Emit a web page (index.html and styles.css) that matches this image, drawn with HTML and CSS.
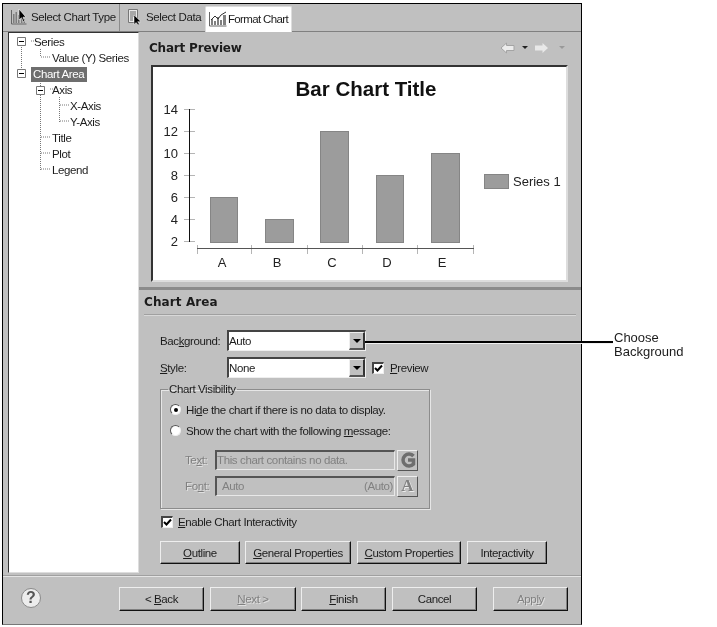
FILE: index.html
```html
<!DOCTYPE html>
<html lang="en">
<head>
<meta charset="utf-8">
<title>Format Chart</title>
<link rel="stylesheet" href="styles.css">
</head>
<body>
<div class="page">
  <div class="window">
    <div class="tabs">
      <div class="tab tab-first">
        <svg class="ico" viewBox="0 0 16 16"><path d="M.500 1v14h15" fill="none" stroke="#666"/><path d="M2 5h1.500v9H2zM4.500 3H6v11H4.500zM7 6h1.500v8H7zM10 8h1.500v6H10zM12.500 10H14v4h-1.500z" fill="#7c7c7c"/><path d="M8 0v11l2.500-2.200 1.800 4 1.500-.7-1.800-3.900H15z" fill="#000" stroke="#fff" stroke-width=".6"/></svg>
        <span>Select Chart Type</span>
      </div>
      <div class="tab tab-second">
        <svg class="ico ico-doc" viewBox="0 0 14 16"><path d="M.500.500h9v13h-9z" fill="#e8e8e8" stroke="#777"/><path d="M2 3h6M2 5h6M2 7h6M2 9h3M2 11h3" stroke="#666"/><path d="M6 6v9.500l2.200-2 1.800 2.500 1.400-.8-1.700-2.500H13z" fill="#000" stroke="#fff" stroke-width=".5"/></svg>
        <span>Select Data</span>
      </div>
      <div class="tab tab-active">
        <svg class="ico ico-wide" viewBox="0 0 18 16"><path d="M.500 1v14h17" fill="none" stroke="#666"/><path d="M2 8h2v6H2zM5 10h2v4H5zM8 6h2v8H8zM11 9h2v5h-2zM14 4h3v10h-3z" fill="#808080"/><path d="M2 9l4-4 3 3 3-4 5-3" fill="none" stroke="#333"/></svg>
        <span>Format Chart</span>
      </div>
    </div>
    <div class="main">
      <div class="tree">
        <svg class="tree-guides" viewBox="0 0 129 150">
          <path d="M13.500 8v32M23 8h6M33 24h9M32.500 16v8M23 40h6M32.500 48v89M42 56h6M51.500 64v25M52 72h9M52 88h9M33 104h9M33 120h9M33 136h9" fill="none" stroke="#777" stroke-dasharray="1 1"/>
          <path d="M9.500 4.500h8v8h-8zM9.500 36.500h8v8h-8zM28.500 53.500h8v8h-8z" fill="#fff" stroke="#777"/>
          <path d="M11 8.500h5M11 40.500h5M30 57.500h5" stroke="#000"/>
        </svg>
        <div class="node l1">Series</div>
        <div class="node l2">Value (Y) Series</div>
        <div class="node l1"><span class="selected">Chart Area</span></div>
        <div class="node l2">Axis</div>
        <div class="node l3">X-Axis</div>
        <div class="node l3">Y-Axis</div>
        <div class="node l2">Title</div>
        <div class="node l2">Plot</div>
        <div class="node l2">Legend</div>
      </div>
      <div class="pane">
        <div class="preview-head">
          <div class="heading heading-tight">Chart Preview</div>
          <div class="nav">
            <svg class="nav-arrow" viewBox="0 0 15 12"><path d="M6.500 1L1 6l5.500 5V8.500H14v-5H6.500z" fill="#ececec" stroke="#a4a4a4"/></svg>
            <span class="nav-drop"></span>
            <svg class="nav-arrow nav-next" viewBox="0 0 15 12"><path d="M8.500 1L14 6l-5.500 5V8.500H1v-5h7.500z" fill="#e8e8e8"/></svg>
            <span class="nav-drop nav-drop-off"></span>
          </div>
        </div>
        <div class="chart-box">
          <svg class="chart" viewBox="153 67 413 213">
            <text class="c-title" x="366" y="96" text-anchor="middle">Bar Chart Title</text>
            <g class="c-tick">
              <path d="M184 109.500h11M184 131.500h11M184 153.500h11M184 175.500h11M184 197.500h11M184 219.500h11M184 241.500h11"/>
              <path d="M197.500 245v9M251.500 245v9M307.500 245v9M362.500 245v9M417.500 245v9M473.500 245v9"/>
            </g>
            <path d="M189.500 109v133" stroke="#111" fill="none"/>
            <path d="M197 248.500h277" stroke="#555" fill="none"/>
            <g class="c-num" text-anchor="end">
              <text x="178" y="114">14</text>
              <text x="178" y="136">12</text>
              <text x="178" y="158">10</text>
              <text x="178" y="180">8</text>
              <text x="178" y="202">6</text>
              <text x="178" y="224">4</text>
              <text x="178" y="246">2</text>
            </g>
            <g class="c-bar">
              <rect x="210.500" y="197.500" width="27" height="45"/>
              <rect x="265.500" y="219.500" width="28" height="23"/>
              <rect x="320.500" y="131.500" width="28" height="111"/>
              <rect x="376.500" y="175.500" width="27" height="67"/>
              <rect x="431.500" y="153.500" width="28" height="89"/>
              <rect x="484.500" y="174.500" width="24" height="14"/>
            </g>
            <g class="c-num" text-anchor="middle">
              <text x="222" y="267">A</text>
              <text x="277" y="267">B</text>
              <text x="332" y="267">C</text>
              <text x="387" y="267">D</text>
              <text x="442" y="267">E</text>
            </g>
            <text class="c-num" x="513" y="186">Series 1</text>
          </svg>
        </div>
        <div class="sash"></div>
        <div class="section-head heading">Chart Area</div>
        <div class="form">
          <div class="form-row row-bg">
            <span class="label">Bac<u>k</u>ground:</span>
            <div class="combo"><span class="combo-text">Auto</span><span class="combo-btn"><i class="caret"></i></span></div>
          </div>
          <div class="form-row row-style">
            <span class="label"><u>S</u>tyle:</span>
            <div class="combo"><span class="combo-text">None</span><span class="combo-btn"><i class="caret"></i></span></div>
            <span class="check"><svg viewBox="0 0 9 9"><path d="M1 4l2.500 2.500L8 1.500" fill="none" stroke="#000" stroke-width="2"/></svg></span>
            <span><u>P</u>review</span>
          </div>
          <fieldset class="group">
            <legend class="group-title">Chart Visibility</legend>
            <div class="radio-row"><span class="radio radio-on"></span><span>Hi<u>d</u>e the chart if there is no data to display.</span></div>
            <div class="radio-row"><span class="radio"></span><span>Show the chart with the following <u>m</u>essage:</span></div>
            <div class="msg-row msg-first">
              <span class="msg-label">Te<u>x</u>t:</span>
              <div class="msg-input">This chart contains no data.</div>
              <div class="msg-btn"><span class="g-mark"><svg viewBox="0 0 16 16"><path d="M13.500 4A6 6 0 1 0 13.500 12V8H8" fill="none" stroke="#6e6e6e" stroke-width="3.500"/></svg></span></div>
            </div>
            <div class="msg-row">
              <span class="msg-label">Fo<u>n</u>t:</span>
              <div class="msg-input msg-font"><span>Auto</span><span>(Auto)</span></div>
              <div class="msg-btn msg-a">A</div>
            </div>
          </fieldset>
          <div class="enable-row">
            <span class="check"><svg viewBox="0 0 9 9"><path d="M1 4l2.500 2.500L8 1.500" fill="none" stroke="#000" stroke-width="2"/></svg></span>
            <span><u>E</u>nable Chart Interactivity</span>
          </div>
          <div class="btn-row">
            <div class="btn w-outline"><span><u>O</u>utline</span></div>
            <div class="btn w-general"><span><u>G</u>eneral Properties</span></div>
            <div class="btn w-custom"><span><u>C</u>ustom Properties</span></div>
            <div class="btn w-inter"><span>Inte<u>r</u>activity</span></div>
          </div>
        </div>
      </div>
    </div>
    <div class="footer">
      <div class="help">?</div>
      <div class="btn w-back"><span>&lt; <u>B</u>ack</span></div>
      <div class="btn w-next off"><span><u>N</u>ext &gt;</span></div>
      <div class="btn w-finish"><span><u>F</u>inish</span></div>
      <div class="btn w-cancel"><span>Cancel</span></div>
      <div class="btn w-apply off"><span>App<u>l</u>y</span></div>
    </div>
  </div>
  <div class="callout-line"></div>
  <div class="callout-text">Choose<br>Background</div>
</div>
</body>
</html>
```
FILE: styles.css
```css
* { box-sizing: border-box; }
html, body { margin: 0; background: #fff; }
.page {
  position: relative;
  width: 717px;
  height: 627px;
  padding: 3px 0 0 2px;
  overflow: hidden;
  will-change: transform;
  font-family: "Liberation Sans", Arial, sans-serif;
  font-size: 11.5px;
  letter-spacing: -0.38px;
  color: #1c1c1c;
}
.window {
  width: 580px;
  height: 622px;
  background: #c0c0c0;
  border: 1px solid #000;
  border-bottom-color: #777;
  display: flex;
  flex-direction: column;
}
.tabs {
  height: 28px;
  flex: none;
  display: flex;
  align-items: flex-end;
  border-bottom: 1px solid #808080;
  position: relative;
}
.tab {
  height: 27px;
  display: flex;
  align-items: center;
  gap: 4px;
  padding-bottom: 1px;
  white-space: nowrap;
}
.tab-first { width: 117px; padding-left: 8px; border-right: 1px solid #8c8c8c; }
.tab-second { width: 85px; padding-left: 8px; }
.tab-active {
  width: 87px;
  height: 26px;
  margin-bottom: -1px;
  padding-left: 3px;
  gap: 1px;
  letter-spacing: -0.65px;
  background: #fff;
  border: 1px solid #ddd;
  border-bottom: 0;
  border-radius: 2px 2px 0 0;
}
.ico { width: 16px; height: 16px; flex: none; }
.ico-doc { width: 14px; }
.ico-wide { width: 18px; }
.main { flex: none; height: 541px; display: flex; padding-left: 5px; }
.tree {
  position: relative;
  width: 131px;
  height: 541px;
  flex: none;
  padding-top: 1px;
  background: #fff;
  border-top: 1px solid #333;
  border-left: 1px solid #333;
  border-right: 1px solid #ddd;
  border-bottom: 1px solid #ddd;
}
.tree-guides { position: absolute; left: -1px; top: 0; width: 129px; height: 150px; }
.node { position: relative; height: 16px; line-height: 16px; white-space: nowrap; }
.l1 { padding-left: 25px; }
.l2 { padding-left: 43px; }
.l3 { padding-left: 61px; }
.selected { display: inline-block; margin-left: -3px; padding: 0 3px 0 2px; background: #6e6e6e; color: #fff; height: 15px; line-height: 15px; }
.pane { flex: 1; min-width: 0; display: flex; flex-direction: column; }
.heading { font-family: "DejaVu Sans", Verdana, sans-serif; font-weight: 700; font-size: 12px; letter-spacing: 0.1px; }
.heading-tight { letter-spacing: -0.2px; }
.preview-head {
  height: 33px;
  flex: none;
  display: flex;
  align-items: center;
  padding: 0 10px 2px 10px;
  justify-content: space-between;
}
.nav { display: flex; align-items: center; margin-right: 6px; }
.nav-arrow { width: 15px; height: 12px; flex: none; }
.nav-next { margin-left: 6px; }
.nav-drop { width: 0; height: 0; margin-left: 7px; border: 3px solid transparent; border-top-color: #222; border-bottom: 0; }
.nav-drop-off { border-top-color: #999; margin-left: 10px; }
.chart-box {
  width: 417px;
  height: 217px;
  margin-left: 12px;
  flex: none;
  background: #fff;
  border-top: 2px solid #333;
  border-left: 2px solid #333;
  border-right: 2px solid #ddd;
  border-bottom: 2px solid #ddd;
}
.chart { display: block; width: 413px; height: 213px; }
.c-title { font: 700 20.5px "Liberation Sans", Arial, sans-serif; letter-spacing: 0; fill: #111; }
.c-num { font: 13px "Liberation Sans", Arial, sans-serif; letter-spacing: 0; fill: #222; }
.c-tick { fill: none; stroke: #b5b5b5; }
.c-bar rect { fill: #9c9c9c; stroke: #858585; }
.sash { height: 3px; margin-top: 5px; background: #8b8b8b; flex: none; }
.section-head {
  height: 25px;
  flex: none;
  margin: 0 5px 0 5px;
  padding-top: 5px;
  border-bottom: 1px solid #a0a0a0;
  box-shadow: 0 1px 0 #d8d8d8;
}
.form { padding-left: 21px; flex: 1; }
.form-row { display: flex; align-items: center; }
.row-bg { margin-top: 15px; }
.row-style { margin-top: 6px; }
.label { width: 67px; flex: none; }
.combo {
  width: 139px;
  height: 21px;
  display: flex;
  background: #fff;
  border-top: 2px solid #444;
  border-left: 2px solid #444;
  border-right: 1px solid #eee;
  border-bottom: 1px solid #eee;
}
.combo-text { flex: 1; line-height: 18px; }
.combo-btn {
  width: 16px;
  flex: none;
  display: flex;
  align-items: center;
  justify-content: center;
  background: #c0c0c0;
  border-top: 1px solid #eee;
  border-left: 1px solid #eee;
  border-right: 2px solid #333;
  border-bottom: 2px solid #555;
}
.caret { width: 0; height: 0; border: 4px solid transparent; border-top-color: #000; border-bottom: 0; }
.check {
  width: 12px;
  height: 12px;
  flex: none;
  background: #fff;
  border-top: 2px solid #444;
  border-left: 2px solid #444;
  border-right: 1px solid #eee;
  border-bottom: 1px solid #eee;
  display: flex;
}
.check svg { width: 9px; height: 9px; display: block; }
.row-style .check { margin: 0 6px 0 6px; }
.group {
  width: 270px;
  height: 126px;
  margin: 5px 0 0 0;
  padding: 4px 0 0 9px;
  border: 1px solid #8c8c8c;
  box-shadow: 1px 1px 0 #e6e6e6, inset 1px 1px 0 #e6e6e6;
  min-width: 0;
}
.group-title { padding: 0 1px; margin-left: -2px; }
.radio-row { display: flex; align-items: center; height: 21px; gap: 5px; }
.radio {
  width: 11px;
  height: 11px;
  flex: none;
  border-radius: 50%;
  background: #fff;
  border: 1px solid #555;
  border-right-color: #eee;
  border-bottom-color: #eee;
  display: flex;
  align-items: center;
  justify-content: center;
}
.radio-on::after { content: ""; width: 4px; height: 4px; border-radius: 50%; background: #000; }
.msg-row { display: flex; align-items: center; height: 20px; margin-top: 6px; color: #808080; }
.msg-first { margin-top: 9px; }
.msg-label { width: 30px; flex: none; text-shadow: 1px 1px 0 #e0e0e0; }
.group .msg-label { margin-left: 15px; }
.msg-input {
  width: 180px;
  height: 20px;
  flex: none;
  line-height: 17px;
  padding-left: 0;
  border-top: 2px solid #555;
  border-left: 2px solid #555;
  border-right: 1px solid #e8e8e8;
  border-bottom: 1px solid #e8e8e8;
}
.msg-font { display: flex; justify-content: space-between; padding: 0 1px 0 5px; }
.msg-btn {
  width: 21px;
  height: 21px;
  flex: none;
  margin-left: 2px;
  border-top: 1px solid #eee;
  border-left: 1px solid #eee;
  border-right: 1px solid #555;
  border-bottom: 1px solid #555;
  display: flex;
  align-items: center;
  justify-content: center;
}
.g-mark { width: 16px; height: 16px; display: block; }
.g-mark svg { display: block; }
.msg-a { font: 700 17px "Liberation Serif", serif; letter-spacing: 0; color: #808080; text-shadow: 1px 1px 0 #eee; }
.enable-row { display: flex; align-items: center; gap: 5px; margin: 7px 0 0 1px; height: 12px; }
.btn-row { display: flex; margin-top: 13px; gap: 5px; }
.btn {
  height: 24px;
  flex: none;
  display: flex;
  align-items: center;
  justify-content: center;
  background: #c0c0c0;
  border-top: 1px solid #eee;
  border-left: 1px solid #eee;
  border-right: 1px solid #111;
  border-bottom: 1px solid #111;
  box-shadow: inset -1px -1px 0 #808080;
}
.w-outline { width: 80px; }
.w-general { width: 106px; }
.w-custom { width: 104px; margin-left: 1px; }
.w-inter { width: 80px; margin-left: 1px; }
.btn-row .btn { height: 23px; }
.footer {
  position: relative;
  flex: 1;
  margin-top: 2px;
  padding: 11px 0 0 116px;
  display: flex;
  align-items: flex-start;
  border-top: 1px solid #a0a0a0;
  box-shadow: inset 0 1px 0 #e4e4e4;
}
.help {
  position: absolute;
  left: 18px;
  top: 12px;
  width: 20px;
  height: 20px;
  border-radius: 50%;
  background: #ececec;
  border: 1px solid #8a8a8a;
  text-align: center;
  font: 700 16px/18px "Liberation Sans", Arial, sans-serif;
  letter-spacing: 0;
  color: #555;
}
.w-back { width: 85px; }
.w-next { width: 86px; margin-left: 6px; }
.w-finish { width: 85px; margin-left: 5px; }
.w-cancel { width: 85px; margin-left: 6px; }
.w-apply { width: 75px; margin-left: 16px; }
.off { color: #808080; text-shadow: 1px 1px 0 #e0e0e0; }
.callout-line {
  position: absolute;
  left: 365px;
  top: 341px;
  width: 248px;
  height: 2px;
  background: #000;
  box-shadow: 0 1px 0 #f0f0f0;
}
.callout-text {
  position: absolute;
  left: 614px;
  top: 331px;
  font-size: 13px;
  line-height: 14px;
  letter-spacing: 0;
}
```
